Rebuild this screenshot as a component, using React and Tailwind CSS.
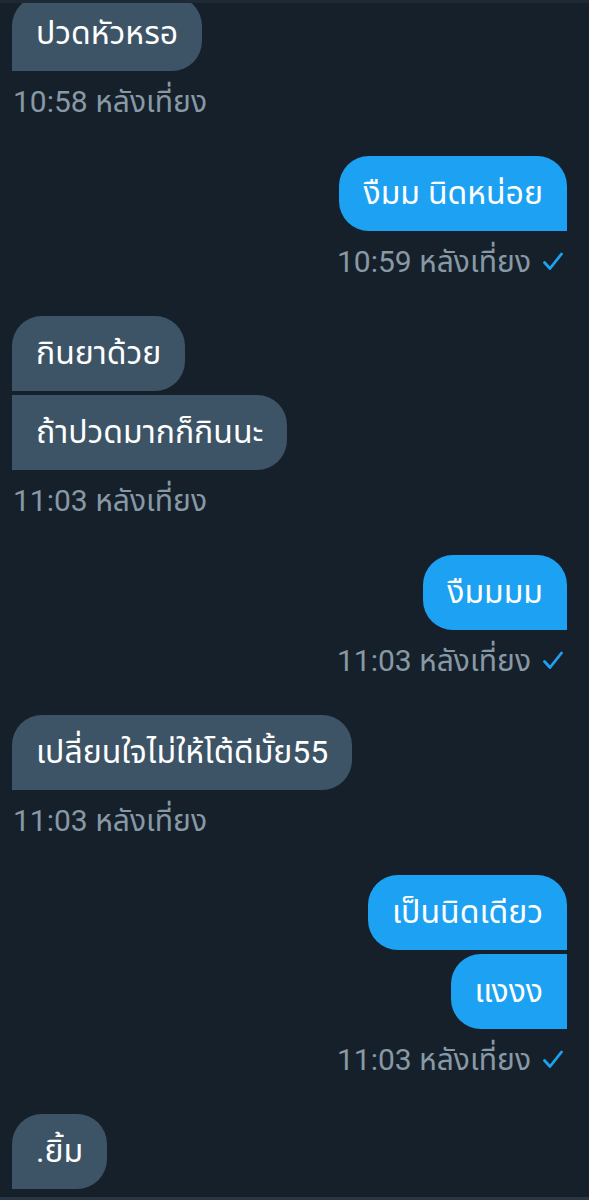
import React from 'react';

const messages = [
  { side: 'in', texts: ['ปวดหัวหรอ'], time: '10:58 หลังเที่ยง' },
  { side: 'out', texts: ['งืมม นิดหน่อย'], time: '10:59 หลังเที่ยง' },
  { side: 'in', texts: ['กินยาด้วย', 'ถ้าปวดมากก็กินนะ'], time: '11:03 หลังเที่ยง' },
  { side: 'out', texts: ['งืมมมม'], time: '11:03 หลังเที่ยง' },
  { side: 'in', texts: ['เปลี่ยนใจไม่ให้โต้ดีมั้ย55'], time: '11:03 หลังเที่ยง' },
  { side: 'out', texts: ['เป็นนิดเดียว', 'แงงง'], time: '11:03 หลังเที่ยง' },
  { side: 'in', texts: ['.ยิ้ม'], time: null },
];

const Check = () => (
  <svg width="20" height="19" viewBox="0 0 20 19" className="ml-[12px] mr-[4px]">
    <polyline points="1.5,10.5 7,16.5 18.5,2" fill="none" stroke="#1da1f2" strokeWidth="2.8" strokeLinecap="round" strokeLinejoin="round" />
  </svg>
);

const Bubble = ({ side, text, first }) => {
  let shape;
  if (side === 'in') shape = first ? 'rounded-[30px] rounded-bl-none' : 'rounded-r-[30px]';
  else shape = first ? 'rounded-[30px] rounded-br-none' : 'rounded-l-[30px]';
  const color = side === 'in' ? 'bg-[#3d5466]' : 'bg-[#1da1f2]';
  return (
    <div className={`${color} ${shape} px-6 py-[21px] text-[32px] leading-[33px] text-white`}>
      {text}
    </div>
  );
};

export default function App() {
  return (
    <div
      className="relative h-[1200px] overflow-hidden bg-[#16202b]"
      style={{ fontFamily: 'Roboto, "Noto Sans Thai", "Noto Sans", sans-serif' }}
    >
      <div className="absolute inset-x-0 top-0 h-[3px] bg-[#1e2936]" />
      <div className="flex flex-col pl-3 pr-[22px] -mt-1">
        {messages.map((m, i) => (
          <div key={i} className={`flex flex-col ${m.side === 'in' ? 'items-start' : 'items-end'} ${i > 0 ? 'mt-[39px]' : ''}`}>
            <div className={`flex flex-col gap-1 ${m.side === 'in' ? 'items-start' : 'items-end'}`}>
              {m.texts.map((t, j) => (
                <Bubble key={j} side={m.side} text={t} first={j === 0} />
              ))}
            </div>
            {m.time && (
              <div className="mt-[14px] flex h-8 items-center text-[30px] text-[#8899a6] pl-px">
                <span>{m.time}</span>
                {m.side === 'out' && <Check />}
              </div>
            )}
          </div>
        ))}
      </div>
      <div className="absolute inset-x-0 bottom-0 h-[3px] bg-[#2a3643]" />
    </div>
  );
}
